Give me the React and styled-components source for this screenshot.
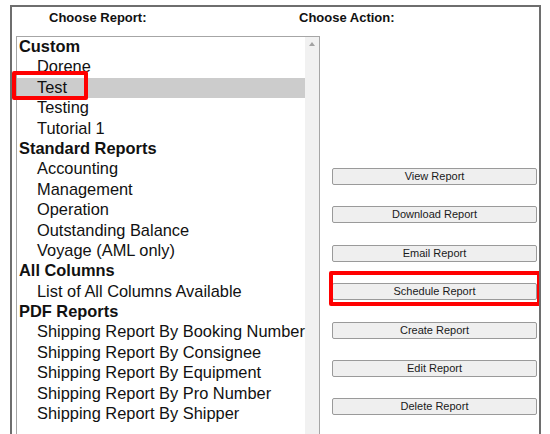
import React from "react";
import styled, { createGlobalStyle } from "styled-components";

const Global = createGlobalStyle`
  html, body { margin: 0; padding: 0; background: #fff; }
  body { font-family: "Liberation Sans", Arial, sans-serif; overflow: hidden; }
`;

const Frame = styled.div`
  margin: 5px 0 0 10px;
  width: 531px;
  height: 429px;
  box-sizing: border-box;
  border: 2px solid #6e6e6e;
  border-bottom: none;
  overflow: hidden;
`;

const HeaderRow = styled.div`
  display: flex;
  height: 29px;
  align-items: flex-start;
  padding-top: 3px;
  box-sizing: border-box;
  font-weight: bold;
  font-size: 13px;
  color: #111;
`;

const HeaderCell = styled.div`
  width: ${(p) => p.$w}px;
  padding-left: ${(p) => p.$pl}px;
  box-sizing: border-box;
`;

const Body = styled.div`
  display: flex;
  padding-left: 4px;
`;

const ListBox = styled.div`
  width: 304px;
  height: 420px;
  box-sizing: border-box;
  border: 1px solid #a6a6a6;
  display: flex;
`;

const Options = styled.div`
  flex: 1;
  font-size: 16.4px;
  color: #111;
`;

const Row = styled.div`
  height: 20.4px;
  line-height: 18.5px;
  padding-left: ${(p) => (p.$group ? 2 : 20)}px;
  font-weight: ${(p) => (p.$group ? "bold" : "normal")};
  background: ${(p) => (p.$selected ? "#cccccc" : "transparent")};
  white-space: nowrap;
  position: relative;
`;

const Scrollbar = styled.div`
  width: 14px;
  background: #f1f1f1;
  display: flex;
  justify-content: center;
  padding-top: 5px;
  box-sizing: border-box;
`;

const UpArrow = styled.div`
  width: 0;
  height: 0;
  border-left: 3.5px solid transparent;
  border-right: 3.5px solid transparent;
  border-bottom: 4px solid #a3a3a3;
`;

const Actions = styled.div`
  display: flex;
  flex-direction: column;
  gap: 21.4px;
  padding-top: 130px;
  margin-left: 12px;
`;

const ActionWrap = styled.div`
  position: relative;
  width: 205px;
  height: 17px;
`;

const Button = styled.button`
  width: 205px;
  height: 17px;
  box-sizing: border-box;
  border: 1px solid #9a9a9a;
  border-radius: 2px;
  background: #efefef;
  font-family: "Liberation Sans", Arial, sans-serif;
  font-size: 11px;
  color: #1a1a1a;
  padding: 0;
  line-height: 15px;
`;

const Highlight = styled.div`
  position: absolute;
  left: ${(p) => p.$l}px;
  top: ${(p) => p.$t}px;
  width: ${(p) => p.$w}px;
  height: ${(p) => p.$h}px;
  box-sizing: border-box;
  border: 4.5px solid #ff0000;
  border-radius: 2px;
  pointer-events: none;
`;

const rows = [
  { t: "Custom", g: true },
  { t: "Dorene" },
  { t: "Test", s: true },
  { t: "Testing" },
  { t: "Tutorial 1" },
  { t: "Standard Reports", g: true },
  { t: "Accounting" },
  { t: "Management" },
  { t: "Operation" },
  { t: "Outstanding Balance" },
  { t: "Voyage (AML only)" },
  { t: "All Columns", g: true },
  { t: "List of All Columns Available" },
  { t: "PDF Reports", g: true },
  { t: "Shipping Report By Booking Number" },
  { t: "Shipping Report By Consignee" },
  { t: "Shipping Report By Equipment" },
  { t: "Shipping Report By Pro Number" },
  { t: "Shipping Report By Shipper" },
];

const actions = [
  "View Report",
  "Download Report",
  "Email Report",
  "Schedule Report",
  "Create Report",
  "Edit Report",
  "Delete Report",
];

export default function App() {
  return (
    <>
      <Global />
      <Frame>
        <HeaderRow>
          <HeaderCell $w={287} $pl={37}>Choose Report:</HeaderCell>
          <HeaderCell $w={200} $pl={0}>Choose Action:</HeaderCell>
        </HeaderRow>
        <Body>
          <ListBox>
            <Options>
              {rows.map((r) => (
                <Row key={r.t} $group={r.g} $selected={r.s}>
                  {r.t}
                  {r.s && <Highlight $l={-5} $t={-7} $w={76} $h={29} />}
                </Row>
              ))}
            </Options>
            <Scrollbar>
              <UpArrow />
            </Scrollbar>
          </ListBox>
          <Actions>
            {actions.map((a) => (
              <ActionWrap key={a}>
                <Button>{a}</Button>
                {a === "Schedule Report" && (
                  <Highlight $l={-3} $t={-9.7} $w={212} $h={35} />
                )}
              </ActionWrap>
            ))}
          </Actions>
        </Body>
      </Frame>
    </>
  );
}
